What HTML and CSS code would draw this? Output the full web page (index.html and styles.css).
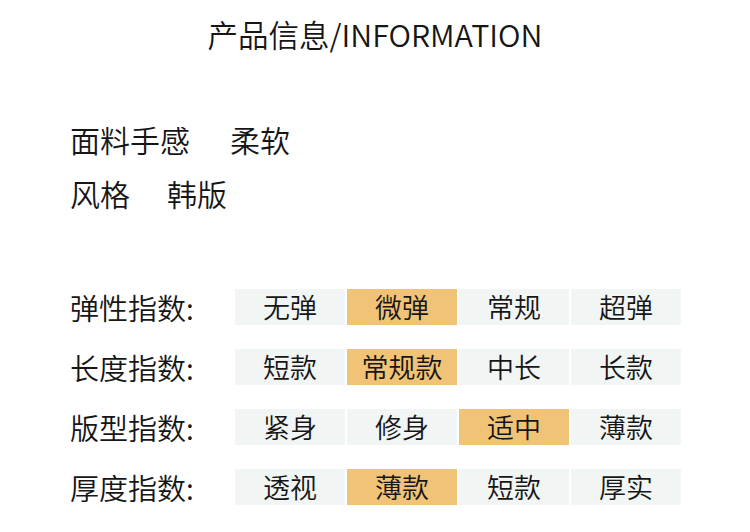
FILE: index.html
```html
<!DOCTYPE html>
<html lang="zh">
<head>
<meta charset="utf-8">
<title>产品信息</title>
<link rel="stylesheet" href="styles.css">
</head>
<body>
<div class="page">
  <h1 class="title">产品信息/INFORMATION</h1>
  <div class="specs">
    <div class="spec"><span class="spec-k1">面料手感</span><span>柔软</span></div>
    <div class="spec"><span class="spec-k2">风格</span><span>韩版</span></div>
  </div>
  <div class="indexes">
    <div class="row">
      <div class="label">弹性指数:</div>
      <div class="cells">
        <div class="cell">无弹</div>
        <div class="cell on">微弹</div>
        <div class="cell">常规</div>
        <div class="cell">超弹</div>
      </div>
    </div>
    <div class="row">
      <div class="label">长度指数:</div>
      <div class="cells">
        <div class="cell">短款</div>
        <div class="cell on">常规款</div>
        <div class="cell">中长</div>
        <div class="cell">长款</div>
      </div>
    </div>
    <div class="row">
      <div class="label">版型指数:</div>
      <div class="cells">
        <div class="cell">紧身</div>
        <div class="cell">修身</div>
        <div class="cell on">适中</div>
        <div class="cell">薄款</div>
      </div>
    </div>
    <div class="row">
      <div class="label">厚度指数:</div>
      <div class="cells">
        <div class="cell">透视</div>
        <div class="cell on">薄款</div>
        <div class="cell">短款</div>
        <div class="cell">厚实</div>
      </div>
    </div>
  </div>
</div>
</body>
</html>
```
FILE: styles.css
```css
* { box-sizing: border-box; }
html, body { margin: 0; padding: 0; background: #fff; }
body {
  font-family: "Noto Sans CJK SC", "Noto Sans", sans-serif;
  font-weight: 350;
  color: #161616;
  width: 750px;
  height: 532px;
  overflow: hidden;
}
.page { padding-top: 12px; }
.title {
  margin: 0;
  font-weight: 350;
  font-size: 30.5px;
  line-height: 44px;
  text-align: center;
}
.specs {
  margin-top: 56px;
  padding-left: 70px;
  font-size: 30px;
  line-height: 54px;
}
.spec { display: flex; }
.spec-k1 { margin-right: 40px; }
.spec-k2 { margin-right: 37px; }
.indexes {
  margin-top: 69px;
  padding-left: 70px;
  display: flex;
  flex-direction: column;
  gap: 24px;
}
.row { display: flex; align-items: center; height: 36px; }
.label {
  width: 165px;
  font-size: 29px;
  line-height: 36px;
}
.cells {
  display: grid;
  grid-template-columns: repeat(4, 110px);
  gap: 2px;
}
.cell {
  height: 36px;
  background: #f1f5f4;
  text-align: center;
  font-size: 27px;
  line-height: 36px;
}
.cell.on { background: #f0c377; }
```
